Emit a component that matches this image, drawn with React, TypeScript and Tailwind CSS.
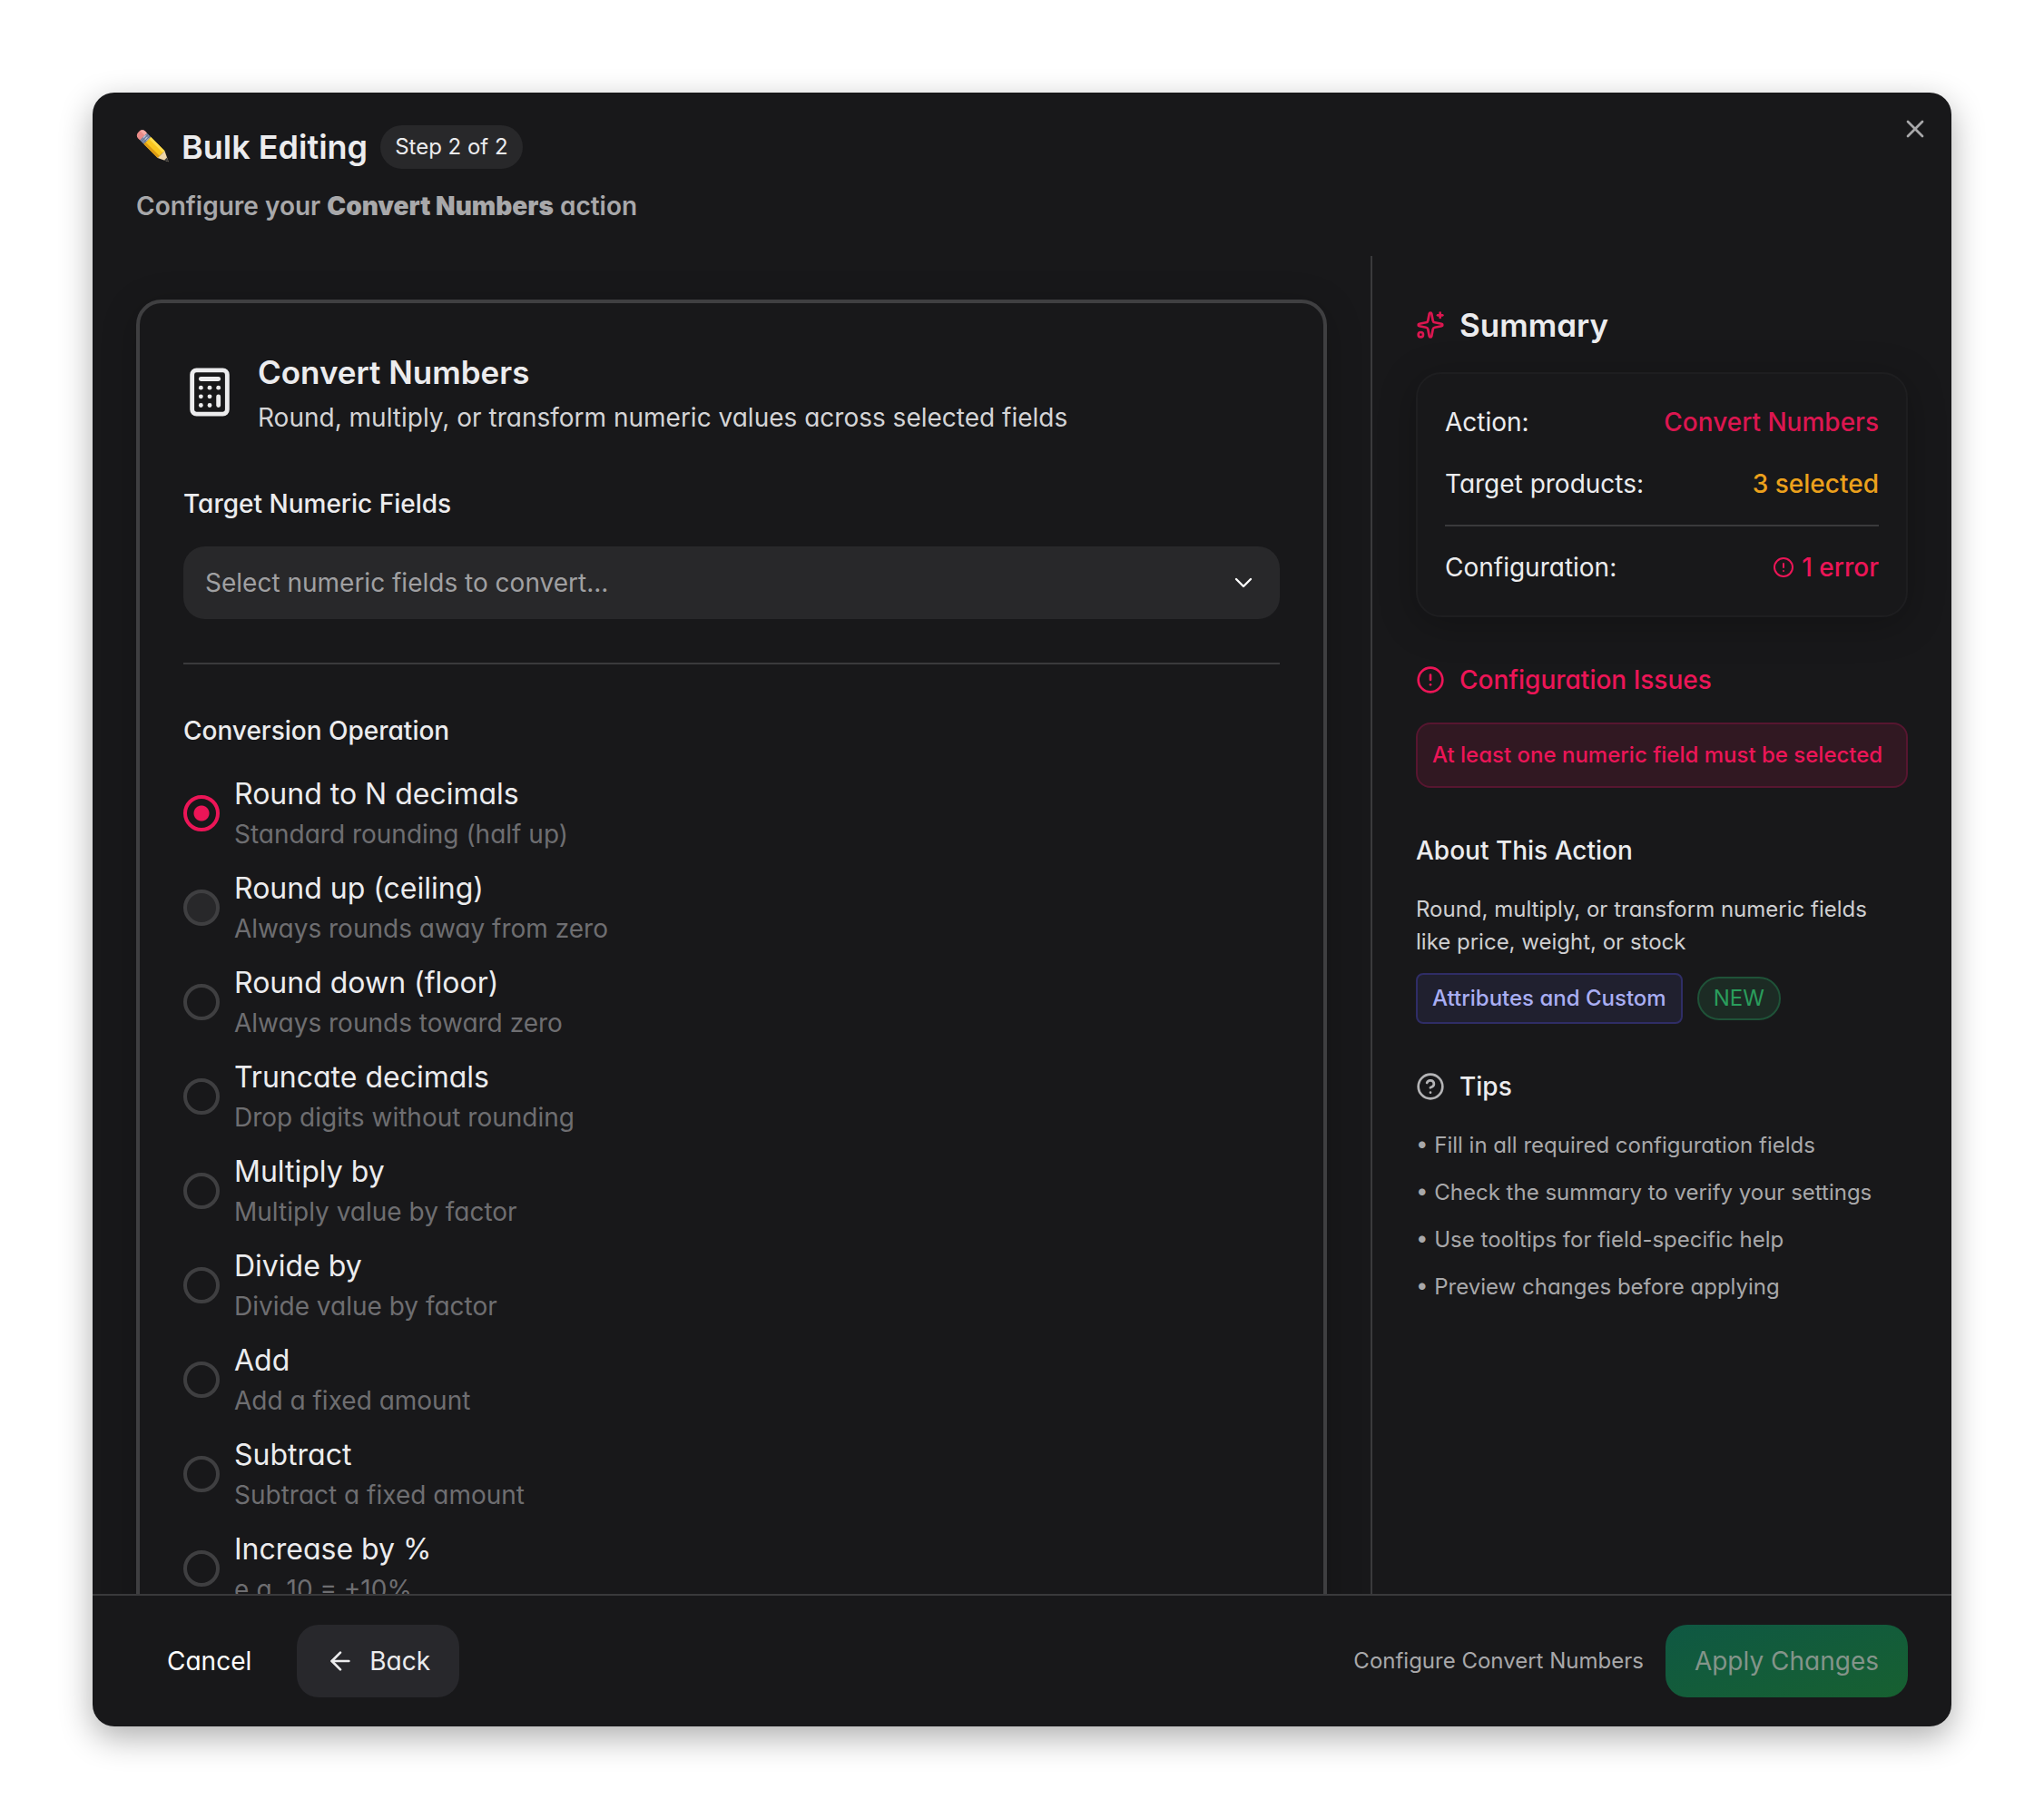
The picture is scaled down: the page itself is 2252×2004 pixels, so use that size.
import { ArrowLeft, Calculator, ChevronDown, CircleAlert, CircleHelp, Sparkles, X } from 'lucide-react';
import { useState } from 'react';

const operations = [
  { id: 'round', label: 'Round to N decimals', hint: 'Standard rounding (half up)' },
  { id: 'ceil', label: 'Round up (ceiling)', hint: 'Always rounds away from zero' },
  { id: 'floor', label: 'Round down (floor)', hint: 'Always rounds toward zero' },
  { id: 'truncate', label: 'Truncate decimals', hint: 'Drop digits without rounding' },
  { id: 'multiply', label: 'Multiply by', hint: 'Multiply value by factor' },
  { id: 'divide', label: 'Divide by', hint: 'Divide value by factor' },
  { id: 'add', label: 'Add', hint: 'Add a fixed amount' },
  { id: 'subtract', label: 'Subtract', hint: 'Subtract a fixed amount' },
  { id: 'increase', label: 'Increase by %', hint: 'e.g. 10 = +10%' }
];

const tips = [
  'Fill in all required configuration fields',
  'Check the summary to verify your settings',
  'Use tooltips for field-specific help',
  'Preview changes before applying'
];

function Pencil() {
  return (
    <svg viewBox="0 0 36 36" className="w-9 h-9 shrink-0 overflow-visible" aria-hidden="true">
      <g transform="translate(6 4.5) rotate(45)">
        <path d="M3-5.500H0A4.500 4.500 0 0 0-4.500-1v2A4.500 4.500 0 0 0 0 5.500h3z" fill="#e98b88" />
        <path d="M3-5.500H0A4.500 4.500 0 0 0-4.300-2H3z" fill="#f4aaa5" />
        <path d="M3-5.500h6v11H3z" fill="#8493b0" />
        <path d="M3-2.500h6V1H3z" fill="#b4c0d6" />
        <path d="M4.500-5.500h1v11h-1zM7-5.500h1v11H7z" fill="#64718f" />
        <path d="M9-5.500h21.500v11H9z" fill="#fac61e" />
        <path d="M9-5.500h21.500v3H9z" fill="#ffdb4d" />
        <path d="M9 2.500h21.500v3H9z" fill="#dc9a14" />
        <path d="M30.500-5.500L42 0 30.500 5.500z" fill="#efd6a8" />
        <path d="M37.500-2.200L42 0l-4.500 2.200z" fill="#3b3b3d" />
      </g>
    </svg>
  );
}

export default function App() {
  const [operation, setOperation] = useState('round');
  const [hovered, setHovered] = useState('ceil');

  return (
    <div className="h-screen p-[102px] bg-white font-['Inter',sans-serif] [font-feature-settings:'cv11'] text-[28px] leading-[42px] text-[#ececee]">
      <div
        role="dialog"
        aria-labelledby="dialog-title"
        className="relative h-full flex flex-col overflow-hidden rounded-3xl bg-[#18181a] shadow-[0_12px_36px_rgba(0,0,0,0.32)]"
      >
        {/* Header */}
        <header className="h-45 shrink-0 px-12 pt-9">
          <div className="flex items-center gap-3.5">
            <Pencil />
            <h1 id="dialog-title" className="text-4xl leading-12 font-semibold">Bulk Editing</h1>
            <span className="h-12 px-4 flex items-center rounded-full bg-[#28282a] text-2xl">Step 2 of 2</span>
          </div>
          <p className="mt-5 font-semibold text-[#a8a8aa]">
            Configure your <strong className="font-black">Convert Numbers</strong> action
          </p>
          <button type="button" aria-label="Close" className="absolute top-6 right-6 text-[#a8a8aa]">
            <X className="w-8 h-8" />
          </button>
        </header>

        <div className="flex-1 min-h-0 flex">
          {/* Configuration */}
          <main className="flex-1 min-w-0 overflow-hidden p-12">
            <section className="p-12 rounded-[28px] border-4 border-[#3f3f41] shadow-[0_8px_40px_rgba(0,0,0,0.2)]">
              <div className="flex items-center gap-6">
                <Calculator className="w-[58px] h-[58px] shrink-0" />
                <div>
                  <h2 className="text-[35px] leading-14 font-semibold">Convert Numbers</h2>
                  <p className="leading-11 text-[#d4d4d6]">Round, multiply, or transform numeric values across selected fields</p>
                </div>
              </div>

              <label htmlFor="fields" className="block mt-13 font-medium">Target Numeric Fields</label>
              <button
                id="fields"
                type="button"
                aria-haspopup="listbox"
                className="mt-[26px] w-full h-20 px-6 flex items-center justify-between rounded-3xl bg-[#28282a] text-[#a0a0a2]"
              >
                Select numeric fields to convert...
                <ChevronDown className="w-8 h-8 text-white" strokeWidth={1.75} />
              </button>

              <hr className="mt-12 mb-13 border-t-2 border-[#3a3a3c]" />

              <fieldset>
                <legend className="mb-[26px] font-medium">Conversion Operation</legend>
                <div className="flex flex-col gap-4" onMouseLeave={() => setHovered('')}>
                  {operations.map((op) => (
                    <label
                      key={op.id}
                      onMouseEnter={() => setHovered(op.id)}
                      className="flex items-center gap-4 cursor-pointer"
                    >
                      <input
                        type="radio"
                        name="operation"
                        value={op.id}
                        checked={operation === op.id}
                        onChange={() => setOperation(op.id)}
                        className={`appearance-none w-10 h-10 shrink-0 rounded-full border-4 border-[#3f3f41] checked:border-[#ec1557] checked:bg-[radial-gradient(circle,#ec1557_8px,transparent_9px)] ${
                          hovered === op.id ? 'bg-[#28282a]' : ''
                        }`}
                      />
                      <span className="flex flex-col">
                        <span className="text-[32px] leading-[46px]">{op.label}</span>
                        <span className="text-[#6e6e71]">{op.hint}</span>
                      </span>
                    </label>
                  ))}
                </div>
              </fieldset>
            </section>
          </main>

          {/* Summary */}
          <aside className="w-[640px] shrink-0 px-12 pt-12 border-l-2 border-[#3a3a3c]">
            <h2 className="flex items-center gap-4 text-[35px] leading-14 font-semibold">
              <Sparkles className="w-8 h-8 text-[#dc1650]" />
              Summary
            </h2>

            <dl className="mt-6 px-[30px] py-8 rounded-[28px] border-2 border-[#1e1e20] shadow-[0_8px_40px_rgba(0,0,0,0.25)]">
              <div className="flex justify-between">
                <dt>Action:</dt>
                <dd className="font-medium text-[#dc1650]">Convert Numbers</dd>
              </div>
              <div className="mt-[26px] flex justify-between">
                <dt>Target products:</dt>
                <dd className="font-medium text-[#eca11c]">3 selected</dd>
              </div>
              <div className="mt-6 pt-6 flex justify-between border-t-2 border-[#3a3a3c]">
                <dt>Configuration:</dt>
                <dd className="flex items-center gap-2 font-medium text-[#ec1557]">
                  <CircleAlert className="w-6 h-6" />
                  1 error
                </dd>
              </div>
            </dl>

            <h3 className="mt-12 flex items-center gap-4 font-medium text-[#ec1557]">
              <CircleAlert className="w-8 h-8" />
              Configuration Issues
            </h3>
            <p className="mt-[26px] p-4 rounded-2xl border-2 border-[#571630] bg-[#311822] text-2xl leading-9 font-medium text-[#ec1557] whitespace-nowrap">
              At least one numeric field must be selected
            </p>

            <h3 className="mt-12 font-medium">About This Action</h3>
            <p className="mt-[26px] pr-8 text-2xl leading-9 text-[#cfcfd1]">
              Round, multiply, or transform numeric fields like price, weight, or stock
            </p>
            <div className="mt-4 flex items-center gap-4">
              <span className="h-14 px-4 flex items-center rounded-lg border-2 border-[#2f2d66] bg-[#20202f] text-2xl font-medium text-[#a9aef3]">
                Attributes and Custom
              </span>
              <span className="h-12 px-4 flex items-center rounded-full border-2 border-[#1f5238] bg-[#1c2b24] text-2xl text-[#2a9d5c]">
                NEW
              </span>
            </div>

            <h3 className="mt-12 flex items-center gap-4 font-medium">
              <CircleHelp className="w-8 h-8 text-[#b4b4b6]" />
              Tips
            </h3>
            <ul className="mt-[26px] flex flex-col gap-4 text-2xl leading-9 text-[#a8a8aa]">
              {tips.map((tip) => (
                <li key={tip}>• {tip}</li>
              ))}
            </ul>
          </aside>
        </div>

        {/* Footer */}
        <footer className="shrink-0 px-12 py-8 flex items-center justify-between border-t-2 border-[#3a3a3c]">
          <div className="flex gap-4">
            <button type="button" className="h-20 px-8 border-2 border-transparent rounded-3xl text-white">Cancel</button>
            <button type="button" className="h-20 px-8 flex items-center gap-4 rounded-3xl bg-[#28282c]">
              <ArrowLeft className="w-8 h-8" />
              Back
            </button>
          </div>
          <div className="flex items-center gap-6">
            <span className="text-2xl text-[#a8a8aa]">Configure Convert Numbers</span>
            <button type="button" disabled className="h-20 px-8 rounded-3xl bg-linear-to-br from-[#0f5843] to-[#176030] text-[#84948a]">
              Apply Changes
            </button>
          </div>
        </footer>
      </div>
    </div>
  );
}
